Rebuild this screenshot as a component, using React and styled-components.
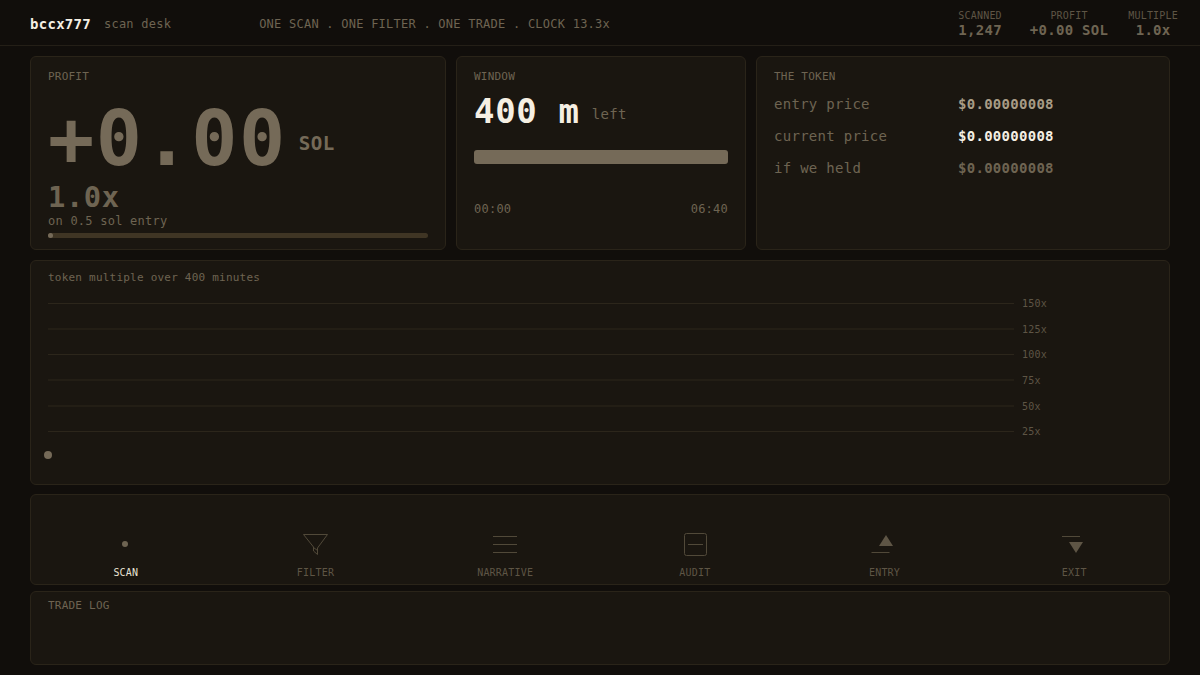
import React from 'react';
import styled, { createGlobalStyle } from 'styled-components';

const GlobalStyle = createGlobalStyle`
  * { box-sizing: border-box; letter-spacing: 0.02em; }
  html, body { margin: 0; padding: 0; background: #110e0b; }
  body {
    font-family: "DejaVu Sans Mono", "Liberation Mono", monospace;
    color: #6e6452;
  }
`;

const Page = styled.div`
  width: 1200px;
  height: 675px;
  overflow: hidden;
  display: flex;
  flex-direction: column;
`;

const Header = styled.header`
  height: 46px;
  flex: none;
  display: flex;
  align-items: center;
  padding: 2px 22px 0 30px;
  border-bottom: 1px solid #241f17;
`;

const Brand = styled.div`
  font-size: 14px;
  font-weight: 700;
  color: #f5efe3;
`;

const Sub = styled.div`
  font-size: 12px;
  margin-left: 13px;
  color: #6e6452;
`;

const Motto = styled.div`
  font-size: 12px;
  margin-left: 88px;
  color: #6e6452;
`;

const Stats = styled.div`
  margin-left: auto;
  display: flex;
  gap: 20px;
`;

const Stat = styled.div`
  display: flex;
  flex-direction: column;
  align-items: center;

  &:first-child {
    margin-right: 8px;
  }
`;

const StatLabel = styled.span`
  font-size: 10px;
  line-height: 12px;
  color: #5e5545;
`;

const StatValue = styled.span`
  font-size: 14px;
  line-height: 16px;
  color: #6e6452;
  font-weight: 700;
`;

const Main = styled.main`
  display: flex;
  flex-direction: column;
  padding: 10px 30px 0;
`;

const TopRow = styled.div`
  display: grid;
  grid-template-columns: 416px 290px 414px;
  grid-template-rows: 194px;
  gap: 10px;
`;

const Card = styled.section`
  background: #1a1610;
  border: 1px solid #2a2419;
  border-radius: 6px;
  padding: 13px 17px;
  position: relative;
  min-width: 0;
`;

const CardLabel = styled.div`
  font-size: 11px;
  line-height: 13px;
  color: #6e6452;
`;

const Hero = styled.div`
  display: flex;
  align-items: center;
  margin-top: 14px;
  height: 84px;
  color: #756a58;
  font-weight: 700;
`;

const HeroValue = styled.span`
  font-size: 76.8px;
  line-height: 84px;
`;

const HeroUnit = styled.span`
  font-size: 19.2px;
  margin-left: 12px;
  margin-top: 9px;
`;

const Multiple = styled.div`
  font-size: 28.8px;
  line-height: 32px;
  font-weight: 700;
  color: #6e6452;
`;

const EntryNote = styled.div`
  font-size: 12px;
  line-height: 14px;
  margin-top: 1px;
  color: #6e6452;
`;

const Track = styled.div`
  position: relative;
  height: 5px;
  margin-top: 5px;
  border-radius: 3px;
  background: #3f3524;
`;

const TrackDot = styled.span`
  position: absolute;
  left: 0;
  top: 0;
  width: 5px;
  height: 5px;
  border-radius: 50%;
  background: #756a58;
`;

const WindowTime = styled.div`
  display: flex;
  align-items: center;
  margin-top: 7px;
  height: 42px;
  line-height: 42px;
`;

const Minutes = styled.span`
  font-size: 34px;
  font-weight: 700;
  color: #f5efe3;
`;

const LeftWord = styled.span`
  font-size: 14px;
  margin-left: 12px;
  margin-top: 6px;
  color: #6e6452;
`;

const WindowBar = styled.div`
  height: 14px;
  margin-top: 18px;
  border-radius: 3px;
  background: #756a58;
`;

const WindowEnds = styled.div`
  display: flex;
  justify-content: space-between;
  margin-top: 38px;
  font-size: 12px;
  line-height: 14px;
  color: #6e6452;
`;

const TokenRows = styled.div`
  display: flex;
  flex-direction: column;
  gap: 16px;
  margin-top: 13px;
`;

const TokenRow = styled.div`
  display: grid;
  grid-template-columns: 184px 1fr;
  font-size: 14px;
  line-height: 16px;
`;

const TokenName = styled.span`
  color: #6e6452;
`;

const TokenValue = styled.span`
  font-weight: 700;
  color: ${p => p.$color};
`;

const ChartCard = styled(Card)`
  height: 225px;
  margin-top: 10px;
  padding-top: 10px;
`;

const ChartTitle = styled.div`
  font-size: 11px;
  line-height: 13px;
  color: #6e6452;
`;

const ChartSvg = styled.svg`
  display: block;
  position: absolute;
  left: 0;
  top: 0;
`;

const ChartLabel = styled.text`
  font-family: "DejaVu Sans Mono", monospace;
  font-size: 10px;
  fill: #5e5545;
`;

const Pipeline = styled(Card)`
  height: 91px;
  margin-top: 9px;
  padding: 0;
  display: grid;
  grid-template-columns: repeat(6, 1fr);
  align-items: end;
`;

const Step = styled.div`
  display: flex;
  flex-direction: column;
  align-items: center;
  gap: 7px;
  padding-bottom: 5px;
`;

const StepIcon = styled.svg`
  display: block;
  width: 32px;
  height: 32px;
`;

const StepLabel = styled.span`
  font-size: 10px;
  line-height: 12px;
  color: ${p => (p.$active ? '#e8e2d4' : '#5e5545')};
`;

const LogCard = styled(Card)`
  height: 74px;
  margin-top: 6px;
  padding-top: 7px;
`;

const STROKE = '#514939';
const FILL = '#5e5545';

const icons = {
  scan: <circle cx="15" cy="16" r="3" fill="#6e6452" />,
  filter: (
    <g fill="none" stroke={STROKE} strokeWidth="1">
      <path d="M4.500 6.500h24L18.500 20v6.500l-4-3.500v-4z" />
      <path d="M14.500 19.500l4 3" />
    </g>
  ),
  narrative: (
    <path d="M4 8.500h24M4 16.500h24M4 24.500h24" stroke={STROKE} strokeWidth="1" />
  ),
  audit: (
    <g fill="none" stroke={STROKE} strokeWidth="1">
      <rect x="5.500" y="5.500" width="22" height="22" rx="2" />
      <path d="M9 16.500h15" />
    </g>
  ),
  entry: (
    <g>
      <path d="M11 18L18 7l7 11z" fill={FILL} />
      <path d="M3.500 24.500h18" stroke={STROKE} strokeWidth="1" />
    </g>
  ),
  exit: (
    <g>
      <path d="M11 14l7 11 7-11z" fill={FILL} />
      <path d="M4 8.500h18" stroke={STROKE} strokeWidth="1" />
    </g>
  ),
};

const steps = [
  { id: 'scan', label: 'SCAN', active: true },
  { id: 'filter', label: 'FILTER' },
  { id: 'narrative', label: 'NARRATIVE' },
  { id: 'audit', label: 'AUDIT' },
  { id: 'entry', label: 'ENTRY' },
  { id: 'exit', label: 'EXIT' },
];

const grid = [
  { y: 42.5, label: '150x' },
  { y: 68, label: '125x' },
  { y: 93.5, label: '100x' },
  { y: 119, label: '75x' },
  { y: 145, label: '50x' },
  { y: 170.5, label: '25x' },
];

const App = () => (
  <Page>
    <GlobalStyle />
    <Header>
      <Brand>bccx777</Brand>
      <Sub>scan desk</Sub>
      <Motto>ONE SCAN . ONE FILTER . ONE TRADE . CLOCK 13.3x</Motto>
      <Stats>
        <Stat>
          <StatLabel>SCANNED</StatLabel>
          <StatValue>1,247</StatValue>
        </Stat>
        <Stat>
          <StatLabel>PROFIT</StatLabel>
          <StatValue>+0.00 SOL</StatValue>
        </Stat>
        <Stat>
          <StatLabel>MULTIPLE</StatLabel>
          <StatValue>1.0x</StatValue>
        </Stat>
      </Stats>
    </Header>
    <Main>
      <TopRow>
        <Card>
          <CardLabel>PROFIT</CardLabel>
          <Hero>
            <HeroValue>+0.00</HeroValue>
            <HeroUnit>SOL</HeroUnit>
          </Hero>
          <Multiple>1.0x</Multiple>
          <EntryNote>on 0.5 sol entry</EntryNote>
          <Track>
            <TrackDot />
          </Track>
        </Card>
        <Card>
          <CardLabel>WINDOW</CardLabel>
          <WindowTime>
            <Minutes>400 m</Minutes>
            <LeftWord>left</LeftWord>
          </WindowTime>
          <WindowBar />
          <WindowEnds>
            <span>00:00</span>
            <span>06:40</span>
          </WindowEnds>
        </Card>
        <Card>
          <CardLabel>THE TOKEN</CardLabel>
          <TokenRows>
            <TokenRow>
              <TokenName>entry price</TokenName>
              <TokenValue $color="#a89c86">$0.00000008</TokenValue>
            </TokenRow>
            <TokenRow>
              <TokenName>current price</TokenName>
              <TokenValue $color="#f5efe3">$0.00000008</TokenValue>
            </TokenRow>
            <TokenRow>
              <TokenName>if we held</TokenName>
              <TokenValue $color="#6e6452">$0.00000008</TokenValue>
            </TokenRow>
          </TokenRows>
        </Card>
      </TopRow>
      <ChartCard>
        <ChartTitle>token multiple over 400 minutes</ChartTitle>
        <ChartSvg width="1138" height="223" viewBox="0 0 1138 223">
          {grid.map(g => (
            <g key={g.label}>
              <line x1="17" x2="983" y1={g.y} y2={g.y} stroke="#2c261b" strokeWidth="1" />
              <ChartLabel x="991" y={g.y + 3.5}>{g.label}</ChartLabel>
            </g>
          ))}
          <circle cx="17" cy="194" r="4" fill="#756a58" />
        </ChartSvg>
      </ChartCard>
      <Pipeline>
        {steps.map(s => (
          <Step key={s.id}>
            <StepIcon viewBox="0 0 32 32">{icons[s.id]}</StepIcon>
            <StepLabel $active={s.active}>{s.label}</StepLabel>
          </Step>
        ))}
      </Pipeline>
      <LogCard>
        <CardLabel>TRADE LOG</CardLabel>
      </LogCard>
    </Main>
  </Page>
);

export default App;
